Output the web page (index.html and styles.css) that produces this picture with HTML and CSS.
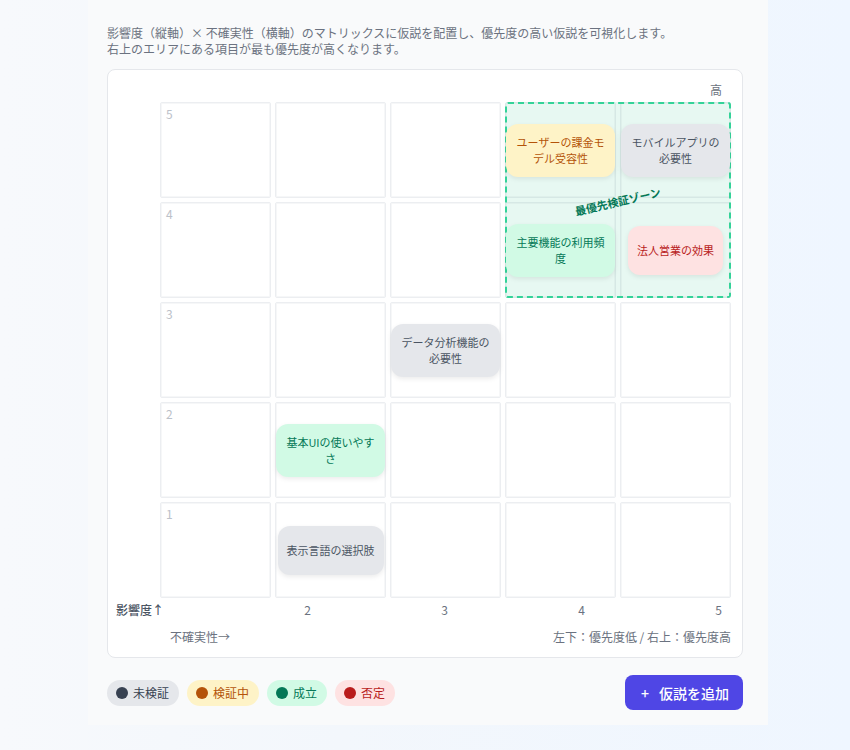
FILE: index.html
```html
<!DOCTYPE html>
<html lang="ja">
<head>
<meta charset="utf-8">
<link rel="stylesheet" href="styles.css">
</head>
<body>
<div class="panel">
  <p class="desc">影響度（縦軸）× 不確実性（横軸）のマトリックスに仮説を配置し、優先度の高い仮説を可視化します。<br>右上のエリアにある項目が最も優先度が高くなります。</p>
  <div class="card">
    <div class="top-label">高</div>
    <div class="grid">
      <div class="cell"><span class="num">5</span></div>
      <div class="cell"></div>
      <div class="cell"></div>
      <div class="cell"><div class="hyp yellow">ユーザーの課金モデル受容性</div></div>
      <div class="cell"><div class="hyp gray">モバイルアプリの必要性</div></div>

      <div class="cell"><span class="num">4</span></div>
      <div class="cell"></div>
      <div class="cell"></div>
      <div class="cell"><div class="hyp green">主要機能の利用頻度</div></div>
      <div class="cell"><div class="hyp red">法人営業の効果</div></div>

      <div class="cell"><span class="num">3</span></div>
      <div class="cell"></div>
      <div class="cell"><div class="hyp gray">データ分析機能の必要性</div></div>
      <div class="cell"></div>
      <div class="cell"></div>

      <div class="cell"><span class="num">2</span></div>
      <div class="cell"><div class="hyp green">基本UIの使いやすさ</div></div>
      <div class="cell"></div>
      <div class="cell"></div>
      <div class="cell"></div>

      <div class="cell"><span class="num">1</span></div>
      <div class="cell"><div class="hyp gray">表示言語の選択肢</div></div>
      <div class="cell"></div>
      <div class="cell"></div>
      <div class="cell"></div>

      <div class="zone"><span class="zone-label">最優先検証ゾーン</span></div>
    </div>
    <div class="x-axis">
      <span class="y-title">影響度↑</span>
      <span>2</span>
      <span>3</span>
      <span>4</span>
      <span>5</span>
    </div>
    <div class="foot">
      <span class="x-title">不確実性→</span>
      <span>左下：優先度低 / 右上：優先度高</span>
    </div>
  </div>
  <div class="bottom">
    <div class="legend">
      <span class="pill gray"><span class="dot"></span>未検証</span>
      <span class="pill yellow"><span class="dot"></span>検証中</span>
      <span class="pill green"><span class="dot"></span>成立</span>
      <span class="pill red"><span class="dot"></span>否定</span>
    </div>
    <button class="add"><span class="plus">+</span><span>仮説を追加</span></button>
  </div>
</div>
</body>
</html>
```

FILE: styles.css
```css
html, body {
  margin: 0;
  padding: 0;
}
body {
  min-height: 750px;
  background: linear-gradient(to right, #f7f9fc 0%, #f3f7fc 40%, #eff6ff 100%);
  font-family: "Noto Sans CJK JP", "Noto Sans", sans-serif;
  color: #374151;
}
.panel {
  margin-left: 88px;
  width: 680px;
  box-sizing: border-box;
  padding: 25px 25px 15px 19px;
  background: #f9fafb;
}
.desc {
  margin: 0;
  font-size: 12px;
  line-height: 15.5px;
  color: #6b7280;
}
.card {
  margin-top: 13px;
  background: #ffffff;
  border: 1px solid #e5e7eb;
  border-radius: 8px;
  padding: 12px 11px 12px 8px;
}
.top-label {
  text-align: right;
  padding-right: 9px;
  font-size: 12px;
  line-height: 16px;
  color: #6b7280;
}
.grid {
  position: relative;
  margin-top: 4px;
  margin-left: 44px;
  display: grid;
  grid-template-columns: repeat(5, 1fr);
  grid-template-rows: repeat(5, 96px);
  column-gap: 4px;
  row-gap: 4px;
}
.cell {
  position: relative;
  background: #ffffff;
  border: 1px solid #eceef1;
  box-shadow: inset 0 0 0 1px #f6f7f8;
  border-radius: 2px;
  display: flex;
  align-items: center;
  justify-content: center;
  min-width: 0;
}
.num {
  position: absolute;
  left: 5px;
  top: 4px;
  font-size: 12px;
  line-height: 14px;
  color: #bcc1c9;
}
.hyp {
  position: relative;
  z-index: 2;
  box-sizing: border-box;
  max-width: 100%;
  min-height: 49px;
  padding: 10px 9px;
  border-radius: 12px;
  font-size: 11px;
  line-height: 16.5px;
  text-align: center;
  display: flex;
  align-items: center;
  justify-content: center;
  box-shadow: 0 2px 5px rgba(0, 0, 0, 0.08);
}
.hyp.yellow { background: #fef3c7; color: #b45309; }
.hyp.gray { background: #e5e7eb; color: #4b5563; }
.hyp.green { background: #d1fae5; color: #047857; }
.hyp.red { background: #fee2e2; color: #b91c1c; }
.zone {
  position: absolute;
  grid-column: 4 / 6;
  grid-row: 1 / 3;
  inset: 0;
  z-index: 1;
  border: 2px dashed #34d399;
  border-radius: 3px;
  background: rgba(16, 185, 129, 0.1);
  display: flex;
  align-items: center;
  justify-content: center;
}
.zone-label {
  margin-top: 2px;
  transform: rotate(-13deg);
  font-size: 11px;
  font-weight: 700;
  color: #047857;
  line-height: 16px;
}
.x-axis {
  margin-top: 4px;
  display: flex;
  justify-content: space-between;
  padding-right: 9px;
  font-size: 12px;
  line-height: 16px;
  color: #6b7280;
}
.y-title {
  margin-right: 10px;
  color: #4b5563;
  font-weight: 500;
}
.foot {
  margin-top: 11px;
  display: flex;
  justify-content: space-between;
  font-size: 12px;
  line-height: 16px;
  color: #6b7280;
}
.x-title {
  margin-left: 54px;
}
.bottom {
  margin-top: 17px;
  display: flex;
  justify-content: space-between;
  align-items: center;
}
.legend {
  display: flex;
  gap: 8px;
}
.pill {
  display: inline-flex;
  align-items: center;
  gap: 5px;
  height: 26px;
  padding: 0 10px 0 9px;
  border-radius: 13px;
  font-size: 12px;
  line-height: 16px;
}
.dot {
  width: 12px;
  height: 12px;
  border-radius: 50%;
  background: currentColor;
}
.pill.gray { background: #e5e7eb; color: #374151; }
.pill.yellow { background: #fef3c7; color: #b45309; }
.pill.green { background: #d1fae5; color: #047857; }
.pill.red { background: #fee2e2; color: #b91c1c; }
.add {
  display: inline-flex;
  align-items: center;
  gap: 10px;
  height: 35px;
  width: 118px;
  padding: 0 0 0 16px;
  border: none;
  border-radius: 8px;
  background: #4f46e5;
  color: #ffffff;
  font-family: "Noto Sans CJK JP", "Noto Sans", sans-serif;
  font-size: 14px;
  font-weight: 500;
  line-height: 18px;
}
.plus {
  font-size: 14px;
}
```
